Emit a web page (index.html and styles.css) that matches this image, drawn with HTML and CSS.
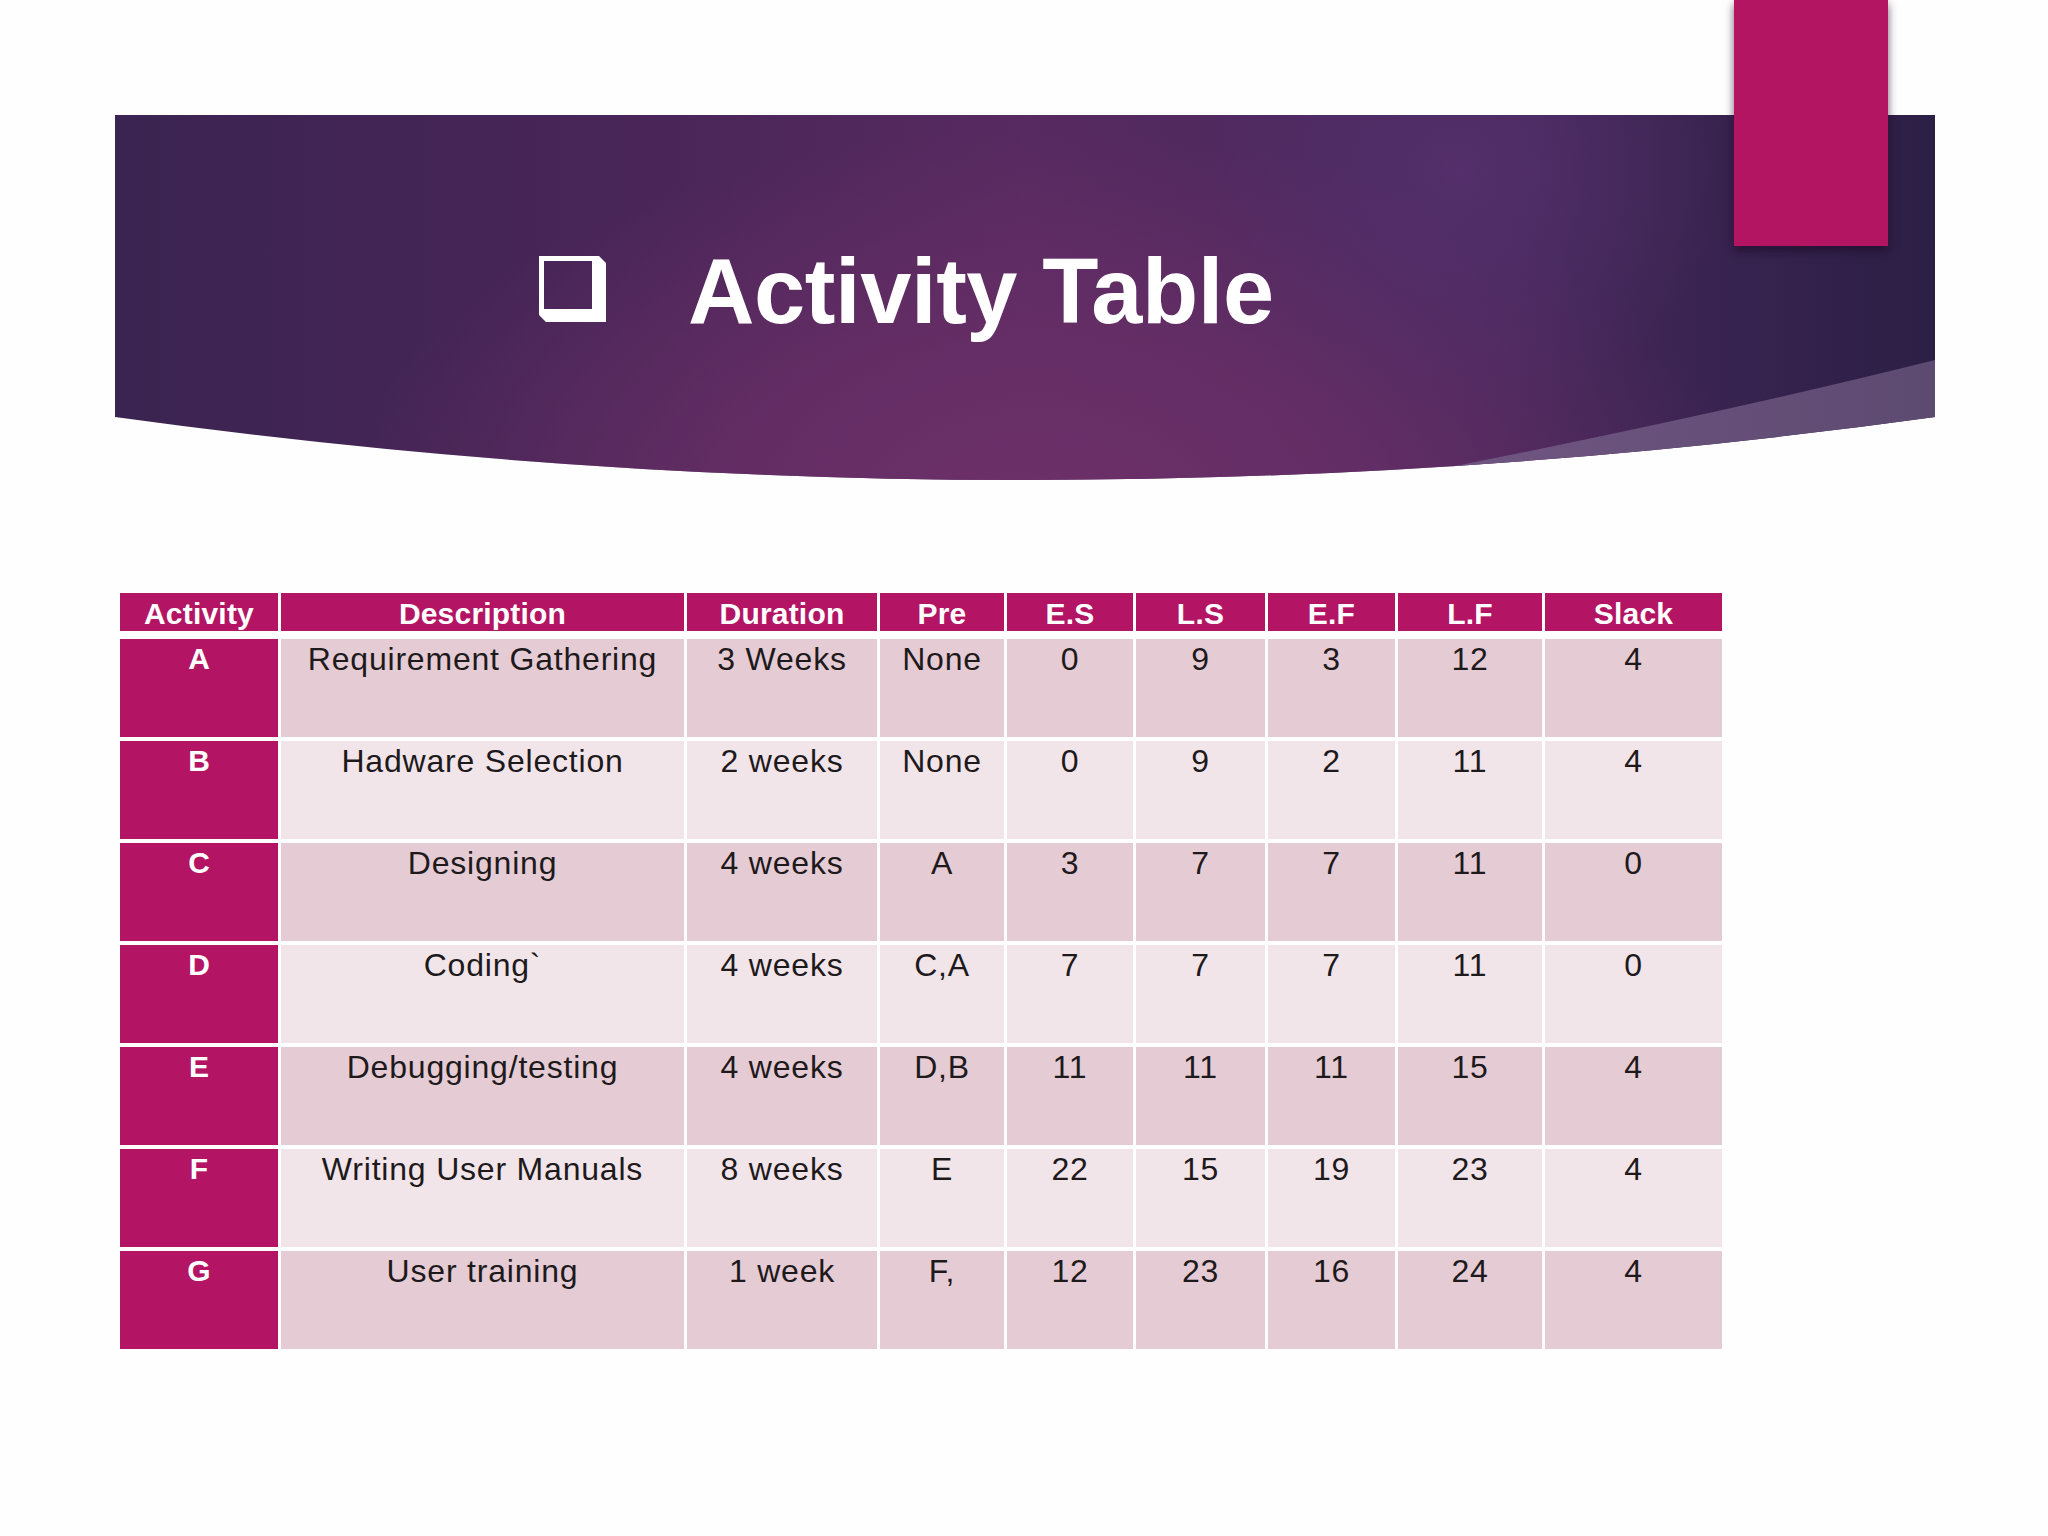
FILE: index.html
```html
<!DOCTYPE html>
<html lang="en">
<head>
<meta charset="utf-8">
<title>Activity Table</title>
<link rel="stylesheet" href="styles.css">
</head>
<body>
<div class="slide">
  <div class="tab"></div>
  <header class="banner">
    <svg class="banner-bg" viewBox="0 0 1820 365" preserveAspectRatio="none" aria-hidden="true">
      <defs>
        <clipPath id="bannerClip">
          <path d="M0,0 L1820,0 L1820,302 Q910,428 0,302 Z"/>
        </clipPath>
        <linearGradient id="baseGrad" x1="0" y1="0" x2="1" y2="0">
          <stop offset="0" stop-color="#3b2451"/>
          <stop offset="0.3" stop-color="#4a2658"/>
          <stop offset="0.5" stop-color="#572a61"/>
          <stop offset="0.75" stop-color="#46285c"/>
          <stop offset="1" stop-color="#2c1f45"/>
        </linearGradient>
        <radialGradient id="glowGrad" cx="930" cy="400" r="700" gradientUnits="userSpaceOnUse" gradientTransform="translate(930 400) scale(1 0.55) translate(-930 -400)">
          <stop offset="0" stop-color="#6e3069" stop-opacity="1"/>
          <stop offset="0.45" stop-color="#6a2f67" stop-opacity="0.75"/>
          <stop offset="1" stop-color="#6a2f67" stop-opacity="0"/>
        </radialGradient>
        <radialGradient id="spotGrad" cx="1345" cy="55" r="260" gradientUnits="userSpaceOnUse">
          <stop offset="0" stop-color="#56306d" stop-opacity="0.85"/>
          <stop offset="1" stop-color="#56306d" stop-opacity="0"/>
        </radialGradient>
        <linearGradient id="bandGrad" x1="0" y1="0" x2="1" y2="0">
          <stop offset="0" stop-color="#715783"/>
          <stop offset="1" stop-color="#5d4a71"/>
        </linearGradient>
      </defs>
      <g clip-path="url(#bannerClip)">
        <rect x="0" y="0" width="1820" height="400" fill="url(#baseGrad)"/>
        <rect x="0" y="0" width="1820" height="400" fill="url(#glowGrad)"/>
        <rect x="0" y="0" width="1820" height="400" fill="url(#spotGrad)"/>
        <path d="M1820,245 Q1600,300 1300,359 L1300,420 L1820,420 Z" fill="url(#bandGrad)"/>
      </g>
    </svg>
    <h1 class="title">
      <svg class="checkbox" viewBox="0 0 67 66" aria-hidden="true">
        <path fill-rule="evenodd" fill="#ffffff" d="M0,0 L60,0 L67,7 L67,66 L7,66 L0,59 Z M5,5 L5,53 L53,53 L53,5 Z"/>
      </svg>
      <span class="title-text">Activity Table</span>
    </h1>
  </header>

  <table class="activity">
    <colgroup>
      <col class="c-act"><col class="c-desc"><col class="c-dur"><col class="c-pre">
      <col class="c-es"><col class="c-ls"><col class="c-ef"><col class="c-lf"><col class="c-slack">
    </colgroup>
    <thead>
      <tr>
        <th>Activity</th><th>Description</th><th>Duration</th><th>Pre</th>
        <th>E.S</th><th>L.S</th><th>E.F</th><th>L.F</th><th>Slack</th>
      </tr>
    </thead>
    <tbody>
      <tr class="odd"><td class="act">A</td><td>Requirement Gathering</td><td>3 Weeks</td><td>None</td><td>0</td><td>9</td><td>3</td><td>12</td><td>4</td></tr>
      <tr class="even"><td class="act">B</td><td>Hadware Selection</td><td>2 weeks</td><td>None</td><td>0</td><td>9</td><td>2</td><td>11</td><td>4</td></tr>
      <tr class="odd"><td class="act">C</td><td>Designing</td><td>4 weeks</td><td>A</td><td>3</td><td>7</td><td>7</td><td>11</td><td>0</td></tr>
      <tr class="even"><td class="act">D</td><td>Coding`</td><td>4 weeks</td><td>C,A</td><td>7</td><td>7</td><td>7</td><td>11</td><td>0</td></tr>
      <tr class="odd"><td class="act">E</td><td>Debugging/testing</td><td>4 weeks</td><td>D,B</td><td>11</td><td>11</td><td>11</td><td>15</td><td>4</td></tr>
      <tr class="even"><td class="act">F</td><td>Writing User Manuals</td><td>8 weeks</td><td>E</td><td>22</td><td>15</td><td>19</td><td>23</td><td>4</td></tr>
      <tr class="odd"><td class="act">G</td><td>User training</td><td>1 week</td><td>F,</td><td>12</td><td>23</td><td>16</td><td>24</td><td>4</td></tr>
    </tbody>
  </table>
</div>
</body>
</html>
```

FILE: styles.css
```css
* {
  box-sizing: border-box;
}

html, body {
  margin: 0;
  padding: 0;
  background: #fefefe;
}

.slide {
  position: relative;
  width: 2048px;
  height: 1536px;
  overflow: hidden;
  background: #fefefe;
  font-family: "Liberation Sans", Arial, sans-serif;
}

/* magenta tab hanging from the top edge, over the banner */
.tab {
  position: absolute;
  left: 1734px;
  top: 0;
  width: 154px;
  height: 246px;
  background: #b41562;
  box-shadow: 0 5px 9px rgba(20, 8, 30, 0.55), 0 0 6px rgba(180, 21, 98, 0.15);
  z-index: 2;
}

.banner {
  position: relative;
  margin: 115px 0 0 115px;
  width: 1820px;
  height: 365px;
}

.banner-bg {
  position: absolute;
  left: 0;
  top: 0;
  width: 1820px;
  height: 365px;
  overflow: visible;
  z-index: 0;
}

.title {
  position: relative;
  z-index: 1;
  margin: 0;
  padding: 130px 0 0 424px;
  display: flex;
  align-items: flex-start;
  gap: 82px;
}

.checkbox {
  display: block;
  width: 67px;
  height: 66px;
  margin-top: 11px;
  flex: none;
}

.title-text {
  color: #ffffff;
  font-family: "Liberation Sans", Arial, sans-serif;
  font-weight: 700;
  font-size: 92px;
  line-height: 92px;
  letter-spacing: -0.4px;
}

/* table */
.activity {
  margin: 109px 0 0 117px;
  border-collapse: separate;
  border-spacing: 3px 4px;
  table-layout: fixed;
  width: 1608px;
}

.c-act { width: 158px; }
.c-desc { width: 403px; }
.c-dur { width: 190px; }
.c-pre { width: 124px; }
.c-es { width: 126px; }
.c-ls { width: 129px; }
.c-ef { width: 127px; }
.c-lf { width: 144px; }
.c-slack { width: 177px; }

.activity th {
  background: #b31463;
  background-clip: padding-box;
  border-bottom: 4px solid transparent;
  color: #ffffff;
  font-weight: 700;
  font-size: 30px;
  letter-spacing: 0.2px;
  line-height: 35px;
  padding: 3px 2px 0;
  text-align: center;
  white-space: nowrap;
}

.activity tbody tr {
  height: 98px;
}

.activity td {
  vertical-align: top;
  text-align: center;
  padding: 2px 4px 0;
  font-size: 32px;
  line-height: 36px;
  letter-spacing: 0.8px;
  color: #1e1a1c;
  white-space: nowrap;
}

.activity .odd td {
  background: #e5cbd4;
}

.activity .even td {
  background: #f2e5ea;
}

.activity td.act,
.activity .odd td.act,
.activity .even td.act {
  background: #b31463;
  color: #ffffff;
  font-weight: 700;
  font-size: 30px;
  letter-spacing: 0;
}
```
